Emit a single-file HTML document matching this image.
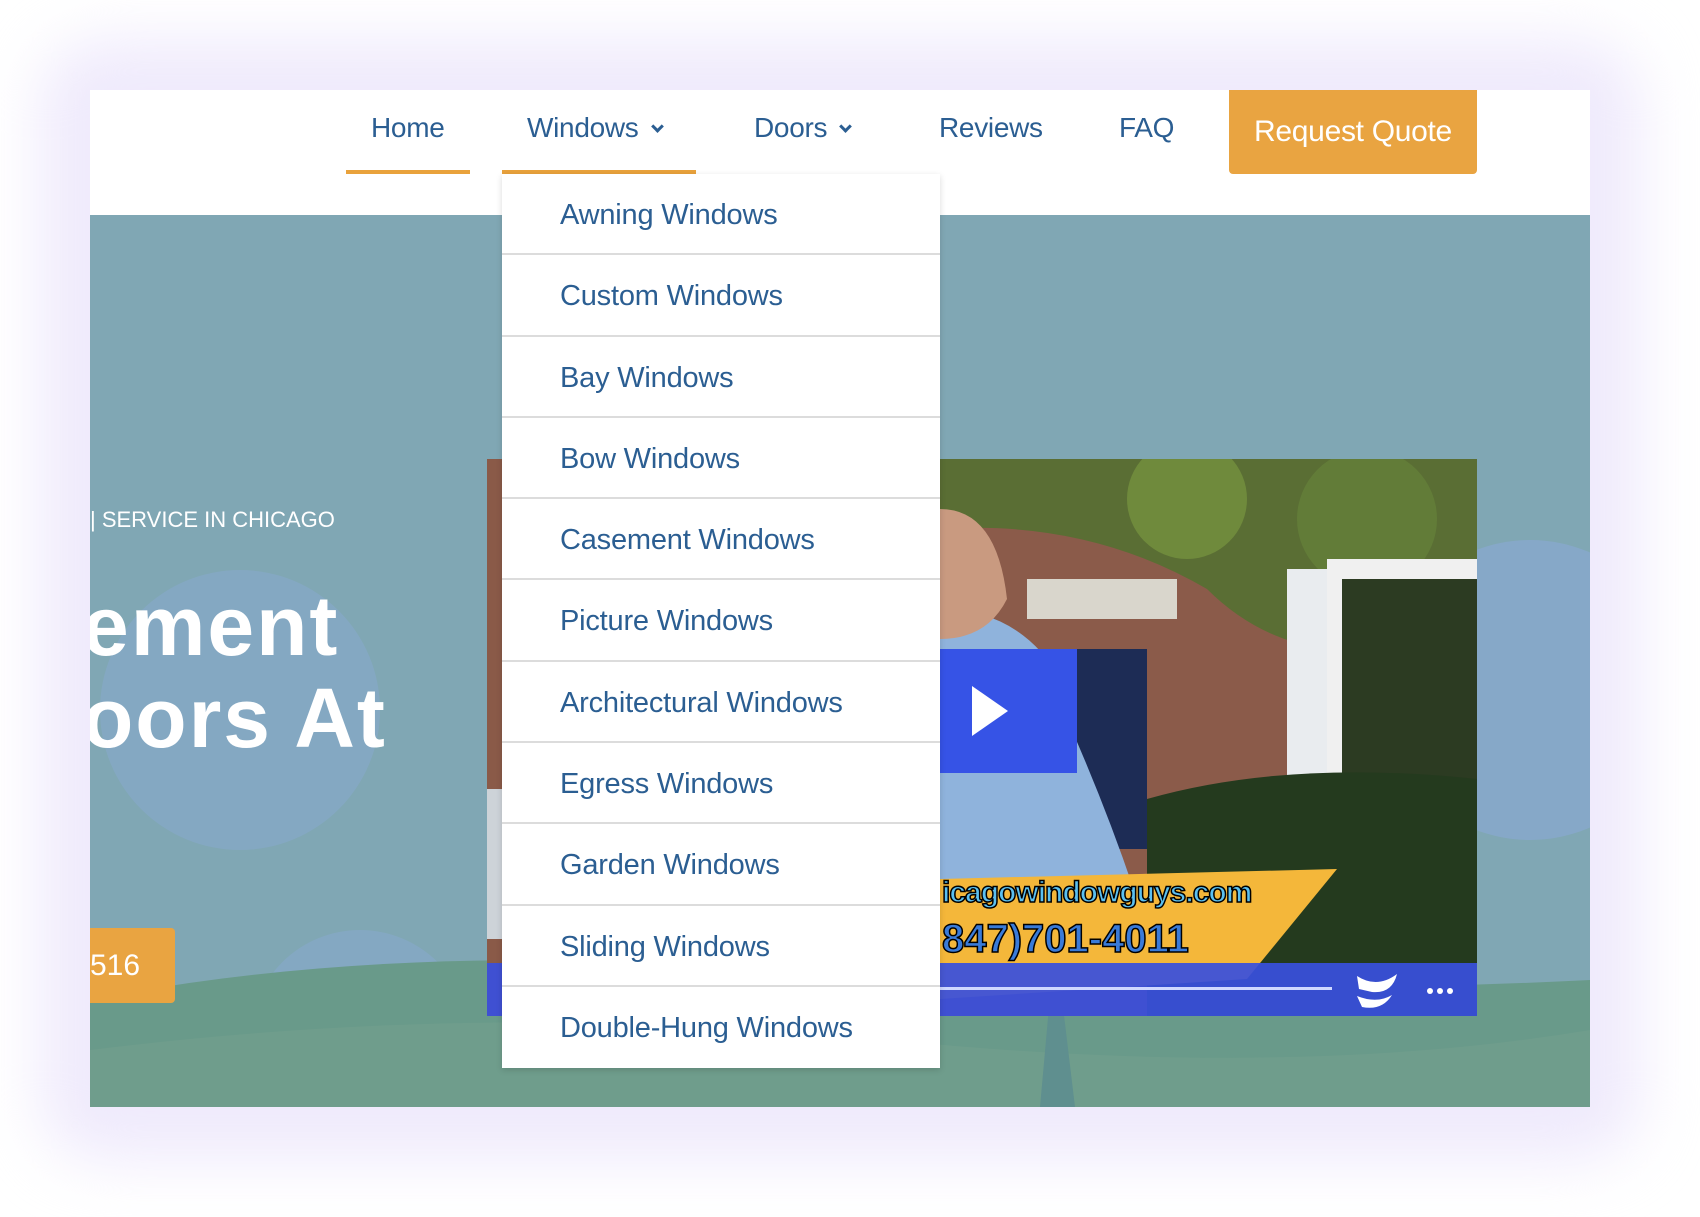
<!DOCTYPE html>
<html><head><meta charset="utf-8"><style>
*{margin:0;padding:0;box-sizing:border-box}
body{width:1700px;height:1217px;background:#fff;position:relative;overflow:hidden;font-family:"Liberation Sans",sans-serif}
.glow{position:absolute;left:40px;top:40px;width:1600px;height:1120px;border-radius:60px;background:#efeafc;filter:blur(30px)}
.card{position:absolute;left:90px;top:90px;width:1500px;height:1017px;background:#80a7b4;overflow:hidden}
.hdr{position:absolute;left:0;top:0;width:1500px;height:125px;background:#fff}
.nav{position:absolute;top:22px;font-size:28px;color:#2b5e92;letter-spacing:-0.3px;white-space:nowrap}
.ul{position:absolute;top:80px;height:4px;background:#e9a23c}
.btn{position:absolute;left:1139px;top:0;width:248px;height:84px;background:#e9a441;border-radius:0 0 4px 4px;color:#fff;font-size:30px;text-align:center;line-height:84px;letter-spacing:-0.3px}
.chev{display:inline-block;width:9px;height:9px;border-right:3px solid #2b5e92;border-bottom:3px solid #2b5e92;transform:rotate(45deg);margin-left:14px;position:relative;top:-6px}
.dd{position:absolute;left:412px;top:84px;width:438px;height:894px;background:#fff;box-shadow:0 2px 6px rgba(0,0,0,.15);z-index:5}
.dd div{height:81.3px;border-bottom:2px solid #dcdcdc;padding-left:58px;line-height:82px;font-size:29px;color:#2b5e92;letter-spacing:-0.2px}
.dd div:last-child{border-bottom:none}
.video{position:absolute;left:397px;top:369px;width:990px;height:557px;overflow:hidden;background:#6b5a4a}
</style></head><body>
<div class="glow"></div>
<div class="card">
 <svg style="position:absolute;left:0;top:0" width="1500" height="1017">
  <circle cx="150" cy="620" r="140" fill="#84a8c2"/>
  <circle cx="1440" cy="600" r="150" fill="#86a8c8"/>
  <circle cx="270" cy="950" r="110" fill="#84a8c2"/>
  <path d="M0 910 Q300 850 700 880 T1500 890 L1500 1017 L0 1017Z" fill="#699a8a"/>
  <path d="M0 960 Q400 910 800 950 T1500 940 L1500 1017 L0 1017Z" fill="#6f9d8c"/>
  <path d="M950 1017 L965 850 L985 1017Z" fill="#5f8f8f"/>
 </svg>
 <div style="position:absolute;left:0;top:417px;font-size:22px;color:#fff;white-space:nowrap">| SERVICE IN CHICAGO</div>
 <div style="position:absolute;left:-8px;top:490px;font-size:84px;font-weight:bold;color:#fff;line-height:92px;letter-spacing:2px;white-space:nowrap">ement<br>oors At</div>
 <div style="position:absolute;left:0;top:838px;width:85px;height:75px;background:#e9a441;border-radius:0 4px 4px 0;color:#fff;font-size:30px;line-height:75px">516</div>
 <div class="video">
  <svg width="990" height="557">
   <rect width="990" height="557" fill="#7a5040"/>
   <rect x="0" y="0" width="20" height="557" fill="#8a5a48"/>
   <rect x="0" y="330" width="20" height="150" fill="#cdd3d8"/>
   <rect x="453" y="0" width="537" height="557" fill="#8b5b4a"/>
   <path d="M453 0 H990 V170 Q820 230 720 130 Q600 60 453 70Z" fill="#5a6e34"/>
   <circle cx="700" cy="40" r="60" fill="#6f8a3c"/><circle cx="880" cy="60" r="70" fill="#627c38"/>
   <rect x="540" y="120" width="150" height="40" fill="#d9d6cc"/>
   <rect x="570" y="190" width="90" height="200" fill="#1d2c55"/>
   <rect x="800" y="110" width="40" height="240" fill="#e9ecef"/>
   <rect x="840" y="100" width="150" height="250" fill="#f0f0f0"/>
   <rect x="855" y="120" width="135" height="210" fill="#2c3b22"/>
   <path d="M660 340 Q800 300 990 320 V557 H660Z" fill="#243a1e"/>
   <path d="M453 150 Q520 150 560 200 L580 260 Q620 350 650 440 L453 470Z" fill="#8fb3dc"/>
   <path d="M453 50 Q510 50 520 140 Q500 180 453 180Z" fill="#c99a80"/>
   <path d="M453 420 L850 410 L760 520 L453 540Z" fill="#f4b73a"/>
   <text x="455" y="443" font-family="Liberation Sans" font-weight="bold" font-size="30" fill="#5bc0f0" stroke="#000" stroke-width="1.5" letter-spacing="-1">icagowindowguys.com</text>
   <text x="455" y="493" font-family="Liberation Sans" font-weight="bold" font-size="40" fill="#3a7bd8" stroke="#000" stroke-width="1.5">847)701-4011</text>
   <rect x="453" y="190" width="137" height="124" fill="#3653e6"/>
   <path d="M485 227 L521 252 L485 277Z" fill="#fff"/>
   <rect x="0" y="504" width="990" height="53" fill="#3950dd" opacity=".93"/>
   <rect x="15" y="528" width="830" height="3" fill="#cfd8ff"/>
   <path d="M870 517 Q890 530 910 515 Q905 535 885 533 L872 530Z M870 537 Q890 545 905 536 Q895 552 875 548Z" fill="#fff"/>
   <circle cx="943" cy="532" r="3" fill="#fff"/><circle cx="953" cy="532" r="3" fill="#fff"/><circle cx="963" cy="532" r="3" fill="#fff"/>
  </svg>
 </div>
 <div class="hdr">
  <div class="nav" style="left:281px">Home</div>
  <div class="ul" style="left:256px;width:124px"></div>
  <div class="nav" style="left:437px">Windows<span class="chev"></span></div>
  <div class="ul" style="left:412px;width:194px"></div>
  <div class="nav" style="left:664px">Doors<span class="chev"></span></div>
  <div class="nav" style="left:849px">Reviews</div>
  <div class="nav" style="left:1029px">FAQ</div>
  <div class="btn">Request Quote</div>
 </div>
 <div class="dd">
  <div>Awning Windows</div><div>Custom Windows</div><div>Bay Windows</div><div>Bow Windows</div><div>Casement Windows</div><div>Picture Windows</div><div>Architectural Windows</div><div>Egress Windows</div><div>Garden Windows</div><div>Sliding Windows</div><div>Double-Hung Windows</div>
 </div>
</div>
</body></html>
